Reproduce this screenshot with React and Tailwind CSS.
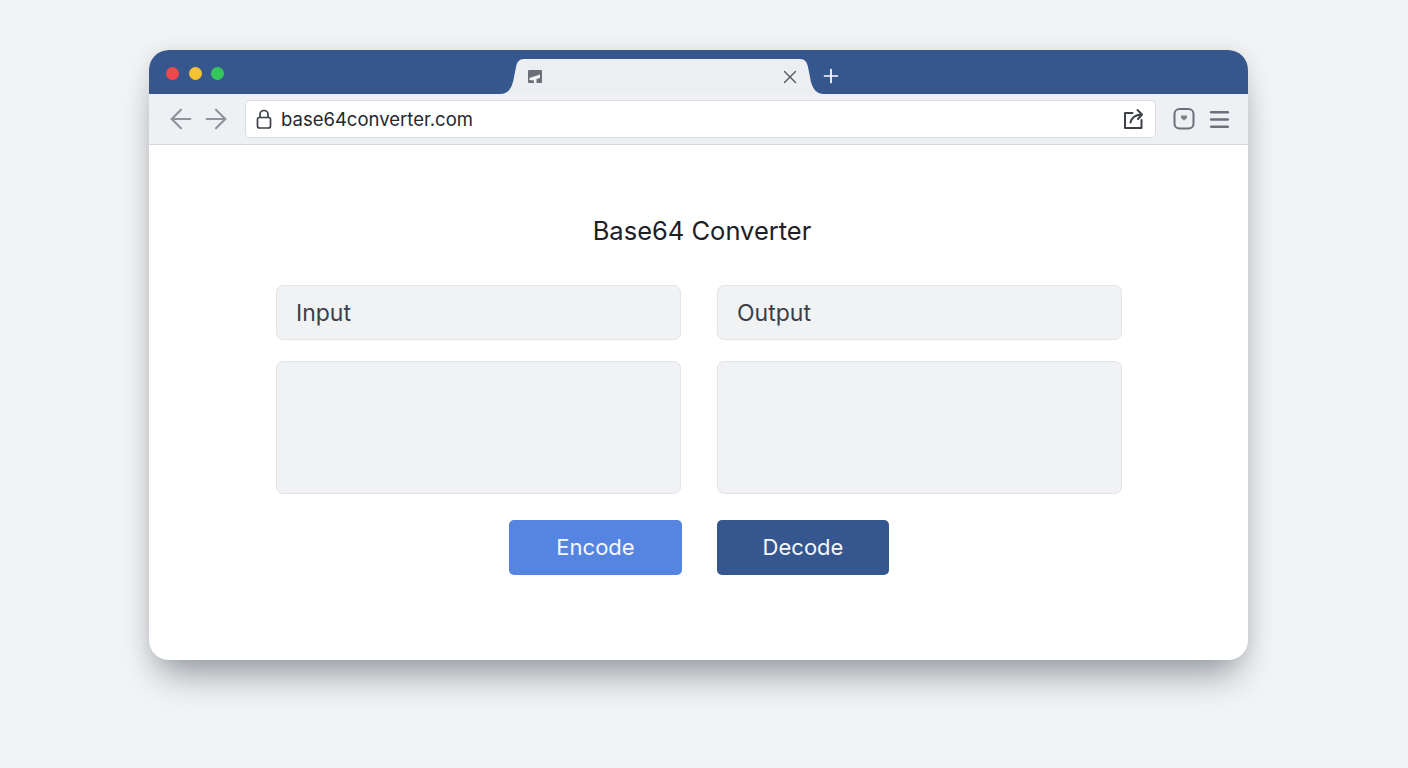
import { ArrowLeft, ArrowRight, Menu, Plus, X } from "lucide-react";

const font = "font-['Inter','Liberation_Sans',sans-serif]";

function TabFlare({ flip }) {
  return (
    <svg width="24" height="35" viewBox="0 0 24 35" className={`shrink-0 ${flip ? "-scale-x-100" : ""}`}>
      <path d="M24 0 C19 0 17 3 16 8 L14 18 C12.5 29 8 35 0 35 L24 35 Z" fill="#eceef2" />
    </svg>
  );
}

function Favicon() {
  return (
    <svg width="16" height="16" viewBox="0 0 16 16">
      <rect x="1" y="1" width="14" height="13" rx="1" fill="#6b7078" />
      <path d="M2.5 9 L13 5.5 V9 L9.5 10 V14.5 H7 V11.5 L2.5 11 Z" fill="#f2f3f5" />
    </svg>
  );
}

function LockIcon() {
  return (
    <svg width="16" height="20" viewBox="0 0 16 20" fill="none" stroke="#3c4149" strokeWidth="1.7">
      <rect x="1.5" y="8.5" width="13" height="10.5" rx="2" />
      <path d="M4 8.5 V5.5 a4 4 0 0 1 8 0 V8.5" />
    </svg>
  );
}

function ShareIcon() {
  return (
    <svg width="22" height="22" viewBox="0 0 22 22" fill="none" stroke="#3c4149" strokeWidth="2" strokeLinecap="round" strokeLinejoin="round">
      <path d="M10.5 5 H3 V20 H19.5 V12" />
      <path d="M8.5 14.5 C9.5 10 12.5 7 19.5 6.5" />
      <path d="M15.5 2 L20 6.5 L16 11" />
    </svg>
  );
}

function PocketIcon() {
  return (
    <svg width="22" height="24" viewBox="0 0 22 24" fill="none">
      <rect x="1.5" y="2" width="19" height="19.5" rx="5" stroke="#6b7079" strokeWidth="2" />
      <path d="M8 8.5 H14 V11 L11 13.5 L8 11 Z" fill="#7a7f88" />
    </svg>
  );
}

function Field({ label }) {
  return (
    <div className="flex h-[55px] items-center rounded-[7px] border border-[#e2e4e9] bg-[#f1f2f4] pl-[19px] pt-[2px] text-[23px] text-[#3b3f48]">
      {label}
    </div>
  );
}

function Box() {
  return <div className="h-[133px] rounded-[7px] border border-[#e2e4e9] bg-[#f1f2f4]" />;
}

export default function App() {
  return (
    <div className={`h-[768px] w-[1408px] overflow-hidden bg-[#f3f4f5] pl-[149px] pt-[50px] ${font}`}>
      <div className="flex h-[610px] w-[1099px] flex-col overflow-hidden rounded-[20px] bg-white shadow-[0_24px_36px_-10px_rgba(90,96,106,0.6),0_0_20px_rgba(120,125,135,0.18)]">
        {/* Title bar */}
        <div className="flex h-[44px] shrink-0 items-end bg-[#35578e]">
          <div className="flex h-full items-center gap-[9.5px] self-start pl-[17px] pt-[2px]">
            <span className="h-[13px] w-[13px] rounded-full bg-[#f0474c]" />
            <span className="h-[13px] w-[13px] rounded-full bg-[#f5c232]" />
            <span className="h-[13px] w-[13px] rounded-full bg-[#35c759]" />
          </div>
          <div className="ml-[276px] flex h-[35px] items-stretch">
            <TabFlare />
            <div className="flex w-[276px] items-center justify-between bg-[#eceef2] pl-[3px]">
              <Favicon />
              <X size={22} strokeWidth={1.5} className="-mr-[1px] text-[#53585f]" />
            </div>
            <TabFlare flip />
          </div>
          <Plus size={22} strokeWidth={1.9} className="mb-[7px] -ml-[4px] text-white" />
        </div>

        {/* Toolbar */}
        <div className="flex h-[51px] shrink-0 items-center border-b border-[#d5d8de] bg-[#eef0f4] pl-[16px]">
          <ArrowLeft size={32} strokeWidth={1.6} className="text-[#8f939b]" />
          <ArrowRight size={32} strokeWidth={1.6} className="ml-[3px] text-[#8f939b]" />
          <div className="ml-[13px] flex h-[38px] w-[911px] items-center rounded-[5px] border border-[#d8dbe1] bg-white pl-[10px] pr-[11px]">
            <LockIcon />
            <span className="ml-[9px] pt-[2px] text-[18.5px] text-[#24272e]">base64converter.com</span>
            <span className="ml-auto">
              <ShareIcon />
            </span>
          </div>
          <span className="ml-[17px]">
            <PocketIcon />
          </span>
          <Menu size={25} strokeWidth={2.4} className="ml-[12px] text-[#6d727a]" />
        </div>

        {/* Page */}
        <div className="flex flex-1 flex-col px-[127px]">
          <h1 className="mt-[68px] pl-[7px] text-center text-[25.5px] font-normal leading-[36px] text-[#1d2027]">
            Base64 Converter
          </h1>
          <div className="mt-[36px] grid grid-cols-[405px_405px] gap-x-[36px] gap-y-[21px]">
            <Field label="Input" />
            <Field label="Output" />
            <Box />
            <Box />
          </div>
          <div className="mt-[26px] flex gap-[35px] pl-[233px]">
            <button className="h-[55px] w-[173px] rounded-[5px] bg-[#5585e0] text-[22px] text-[#f4f7fd]">Encode</button>
            <button className="h-[55px] w-[172px] rounded-[5px] bg-[#35568e] text-[22px] text-[#f4f7fd]">Decode</button>
          </div>
        </div>
      </div>
    </div>
  );
}
